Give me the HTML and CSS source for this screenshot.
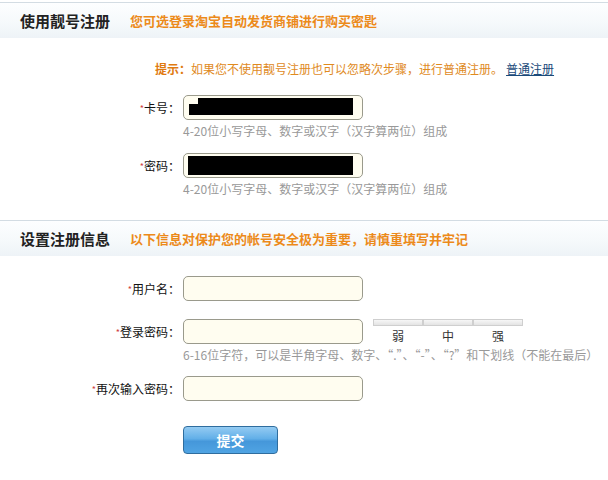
FILE: index.html
```html
<!DOCTYPE html>
<html lang="zh-CN">
<head>
<meta charset="utf-8">
<title>注册</title>
<link rel="stylesheet" href="styles.css">
</head>
<body>
<div class="head first">
  <span class="head-title">使用靓号注册</span>
  <span class="head-sub">您可选登录淘宝自动发货商铺进行购买密匙</span>
</div>
<div class="hint"><b>提示：</b>如果您不使用靓号注册也可以忽略次步骤，进行普通注册。<a href="#" class="link">普通注册</a></div>

<div class="row r-card">
  <label class="lbl"><i>*</i>卡号：</label>
  <div class="field"><span class="redact r1"></span></div>
</div>
<div class="help">4-20位小写字母、数字或汉字（汉字算两位）组成</div>
<div class="row r-pass">
  <label class="lbl"><i>*</i>密码：</label>
  <div class="field"><span class="redact r2"></span></div>
</div>
<div class="help">4-20位小写字母、数字或汉字（汉字算两位）组成</div>

<div class="head second">
  <span class="head-title">设置注册信息</span>
  <span class="head-sub">以下信息对保护您的帐号安全极为重要，请慎重填写并牢记</span>
</div>

<div class="row r-user">
  <label class="lbl"><i>*</i>用户名：</label>
  <div class="field"></div>
</div>
<div class="row r-login">
  <label class="lbl"><i>*</i>登录密码：</label>
  <div class="field"></div>
  <div class="strength">
    <div class="seg"><span class="bar"></span><span class="tx">弱</span></div>
    <div class="seg"><span class="bar"></span><span class="tx">中</span></div>
    <div class="seg"><span class="bar"></span><span class="tx">强</span></div>
  </div>
</div>
<div class="help">6-16位字符，可以是半角字母、数字、“.”、“-”、“?”和下划线（不能在最后）</div>
<div class="row r-again">
  <label class="lbl"><i>*</i>再次输入密码：</label>
  <div class="field"></div>
</div>
<div class="btn-row"><button class="submit" type="button">提交</button></div>
</body>
</html>
```
FILE: styles.css
```css
html, body {
  margin: 0;
  padding: 0;
  background: #fff;
}
body {
  font-family: "Noto Sans CJK SC", "Liberation Sans", sans-serif;
  font-size: 12px;
  color: #333;
  width: 608px;
  height: 480px;
  overflow: hidden;
}
.head {
  height: 35px;
  border-top: 1px solid #d3dce3;
  background: linear-gradient(to bottom, #fdfeff 0%, #f5f9fb 60%, #eef3f7 100%);
  display: flex;
  align-items: center;
  padding-left: 20px;
}
.head.first { margin-top: 2px; }
.head.second { margin-top: 23px; }
.head-title {
  font-size: 15px;
  font-weight: bold;
  color: #222;
  width: 110px;
  flex: none;
}
.head-sub {
  font-size: 13px;
  font-weight: bold;
  color: #ec8a1a;
}
.hint {
  margin-top: 23px;
  padding-left: 155px;
  line-height: 16px;
  color: #e08a1e;
}
.hint b { font-weight: bold; color: #e07a10; }
.link {
  color: #1a4a7a;
  text-decoration: underline;
  margin-left: 3px;
}
.row {
  display: flex;
  align-items: flex-start;
}
.r-card { margin-top: 18px; }
.r-pass { margin-top: 14px; }
.r-user { margin-top: 20px; }
.r-login { margin-top: 18px; }
.r-again { margin-top: 13px; }
.lbl {
  width: 183px;
  text-align: right;
  line-height: 25px;
  height: 25px;
  color: #111;
  padding-right: 3px;
  box-sizing: border-box;
}
.lbl i {
  font-style: normal;
  color: #d04040;
  font-size: 9px;
  vertical-align: 1px;
}
.field {
  width: 180px;
  height: 25px;
  box-sizing: border-box;
  border: 1px solid #9a9a8c;
  border-radius: 5px;
  background: #fffdf0;
  position: relative;
}
.redact {
  position: absolute;
  background: #000;
  top: 2px;
  height: 17px;
}
.r1 { left: 14px; width: 155px; }
.r2 { left: 4px; width: 165px; }
.r1::before {
  content: "";
  position: absolute;
  left: -9px;
  top: 6px;
  width: 9px;
  height: 11px;
  background: #000;
}
.r2::before {
  content: "";
  position: absolute;
  left: 0;
  top: 17px;
  width: 165px;
  height: 2px;
  background: #000;
}
.help {
  margin-top: 3px;
  padding-left: 183px;
  line-height: 16px;
  color: #999;
}
.strength {
  display: flex;
  margin-left: 10px;
  margin-top: 0;
}
.seg {
  width: 50px;
  display: flex;
  flex-direction: column;
  align-items: center;
}
.bar {
  width: 48px;
  height: 5px;
  border: 1px solid #cfcfcf;
  background: linear-gradient(#f6f6f6, #e4e4e4);
}
.tx {
  margin-top: 3px;
  line-height: 14px;
  color: #333;
}
.btn-row {
  margin-top: 25px;
  padding-left: 183px;
}
.submit {
  width: 95px;
  height: 28px;
  border: 1px solid #2f6d9e;
  border-radius: 4px;
  background: linear-gradient(to bottom, #94cbf2 0%, #62afe8 45%, #4597da 55%, #50a4e3 100%);
  color: #fff;
  font-family: "Noto Sans CJK SC", sans-serif;
  font-size: 14px;
  font-weight: bold;
  padding: 0;
  cursor: pointer;
}
```
